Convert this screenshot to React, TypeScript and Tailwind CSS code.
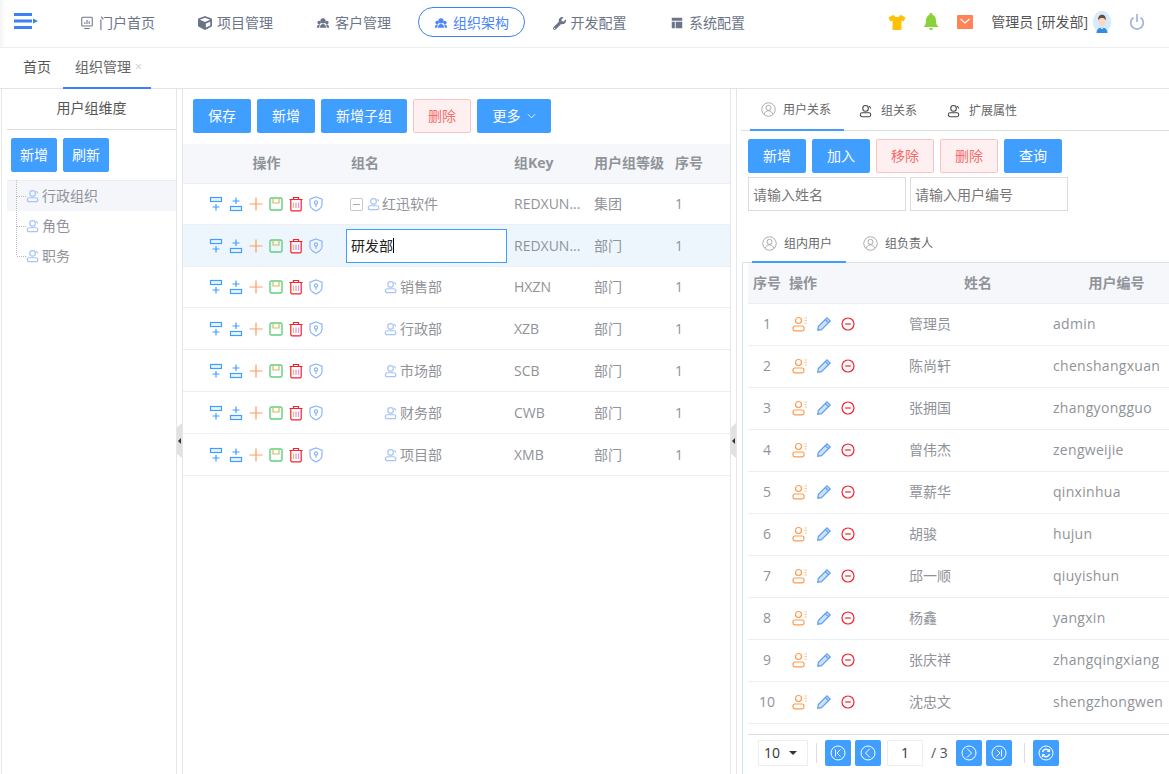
import type { ReactNode } from "react";
import clsx from "clsx";
import { FaCube, FaWrench } from "react-icons/fa";

const Svg = ({ children, className }: { children: ReactNode; className?: string }) => (
  <svg viewBox="0 0 16 16" fill="none" stroke="currentColor" strokeWidth="1.2" className={clsx("block w-4 h-4 shrink-0", className)}>
    {children}
  </svg>
);

const BoardIcon = ({ className }: { className?: string }) => (
  <Svg className={className}>
    <rect x="2" y="1.5" width="12" height="10" rx="1" />
    <path d="M5.5 9V7M8 9V4.5M10.5 9V6M5 14.3h6" />
  </Svg>
);

const GroupIcon = ({ className }: { className?: string }) => (
  <svg viewBox="0 0 16 16" fill="currentColor" className={clsx("block w-4 h-4 shrink-0", className)}>
    <circle cx="8" cy="5.5" r="3" />
    <circle cx="3.6" cy="7.5" r="2" />
    <circle cx="12.4" cy="7.5" r="2" />
    <path d="M4.5 13.5c0-3 1.5-4.5 3.5-4.5s3.5 1.5 3.5 4.5zM1 13.5c0-2.3.9-3.8 2.6-3.8.5 0 .8.1 1 .3-.7 1-1 2.2-1 3.5zM15 13.5c0-2.3-.9-3.8-2.6-3.8-.5 0-.8.1-1 .3.7 1 1 2.2 1 3.5z" />
  </svg>
);

const TableIcon = ({ className }: { className?: string }) => (
  <svg viewBox="0 0 16 16" fill="currentColor" className={clsx("block w-4 h-4 shrink-0", className)}>
    <path d="M2 2h12v3.5H2zM2 6.5h3.5V14H2zM6.5 6.5H14V14H6.5z" />
  </svg>
);

// head plus wide shoulders, used in the trees and the tab bars
const PersonPaths = () => (
  <>
    <circle cx="7.5" cy="5" r="3.2" />
    <rect x="1.5" y="10" width="12" height="4.5" rx="2.2" />
    <path d="M11.5 2.5c1 .5 1.8 1.5 1.8 2.7" />
  </>
);

const UserIcon = ({ className }: { className?: string }) => (
  <svg viewBox="0 0 16 16" fill="none" stroke="currentColor" strokeWidth="1.4" className={clsx("block w-[14px] h-[14px] shrink-0 text-[#a9c4f5]", className)}>
    <PersonPaths />
  </svg>
);

const TabUser = () => (
  <svg viewBox="0 0 16 16" fill="none" stroke="currentColor" strokeWidth="1.2" className="block w-[14px] h-[14px] shrink-0 text-[#444]">
    <PersonPaths />
  </svg>
);

const CircleUser = ({ className }: { className?: string }) => (
  <Svg className={clsx("text-[#909399]", className)}>
    <circle cx="8" cy="8" r="7.2" strokeWidth="0.8" />
    <circle cx="8" cy="6.2" r="2.7" strokeWidth="0.8" />
    <path d="M3.5 13c.5-2.2 2.3-3.6 4.5-3.600s4 1.400 4.500 3.600" strokeWidth="0.8" />
  </Svg>
);

const groupOps = [
  <Svg key="above" className="text-[#409eff]">
    <rect x="2.5" y="1.5" width="11" height="4" fill="#eaf4ff" />
    <path d="M8 8v6.5M4.5 11h7" />
  </Svg>,
  <Svg key="below" className="text-[#409eff]">
    <rect x="2.5" y="10.5" width="11" height="4" fill="#eaf4ff" />
    <path d="M8 1.500V8M4.500 5h7" />
  </Svg>,
  <Svg key="plus" className="text-[#ff9a5c]">
    <path d="M8 1.500v13M1.500 8h13" />
  </Svg>,
  <Svg key="save" className="text-[#5fcf80]">
    <rect x="2" y="2" width="12" height="12" rx="1.500" strokeWidth="1.400" />
    <path d="M5 2v5h6V2" stroke="#c9c05f" />
  </Svg>,
  <Svg key="trash" className="text-[#f5222d]">
    <path d="M1.500 3.500h13M5.500 3.500V1.500h5v2M2.800 3.500v10a1.300 1.300 0 0 0 1.300 1.300h7.800a1.300 1.300 0 0 0 1.300-1.300v-10" strokeWidth="1.200" />
    <path d="M5.500 6.500v5.500" stroke="#ffb27d" />
    <path d="M8 6.500v5.500" stroke="#f98ac0" />
    <path d="M10.500 6.500v5.500" stroke="#d6a0ff" />
  </Svg>,
  <Svg key="shield" className="text-[#8db4fb]">
    <path d="M8 1l6 2.200v5.300c0 3-2.700 5-6 6.500-3.300-1.500-6-3.500-6-6.500V3.200z" />
    <circle cx="8" cy="6.500" r="1.600" />
    <path d="M8 8.100v3" />
  </Svg>,
];

const userOps = [
  <Svg key="user" className="text-[#ff9a4d]">
    <circle cx="6.500" cy="4.500" r="3" />
    <rect x="1" y="10" width="11" height="4.800" rx="1.800" />
    <path d="M12.500 2h2.500M12.500 4.500h2.500M12.500 7h2.500" stroke="#f7c9a2" />
  </Svg>,
  <Svg key="pencil" className="text-[#5b9df5]">
    <path d="M11 1.800l3.200 3.200-8.700 8.700-3.700.5.500-3.700z" fill="#cfe2fb" />
    <path d="M9.300 3.500l3.200 3.200" />
  </Svg>,
  <Svg key="minus" className="text-[#f5222d]">
    <circle cx="8" cy="8" r="6" />
    <path d="M5.200 8h5.600" />
  </Svg>,
];

const navItems = [
  { icon: <BoardIcon className="w-[14px] h-[14px]" />, label: "门户首页" },
  { icon: <FaCube className="w-[14px] h-[14px]" />, label: "项目管理" },
  { icon: <GroupIcon className="w-[14px] h-[14px]" />, label: "客户管理" },
  { icon: <GroupIcon className="w-[14px] h-[14px]" />, label: "组织架构", active: true },
  { icon: <FaWrench className="w-[13px] h-[13px]" />, label: "开发配置" },
  { icon: <TableIcon className="w-[14px] h-[14px]" />, label: "系统配置" },
];

const Btn = ({ children, danger, className }: { children: ReactNode; danger?: boolean; className?: string }) => (
  <button
    type="button"
    className={clsx(
      "h-[34px] rounded-[2px] border text-sm flex items-center justify-center",
      danger ? "bg-[#fef0f0] border-[#fbc4c4] text-[#f56c6c]" : "bg-[#409eff] border-[#409eff] text-white",
      className ?? "w-[58px]",
    )}
  >
    {children}
  </button>
);

const Header = () => (
  <header className="h-[48px] shrink-0 flex items-center pb-[3px] border-b border-[#eeeeee] bg-gradient-to-r from-[#f4f4f4] to-white to-[0.5%]">
    <div className="w-[64px] pl-[14px]">
      <svg viewBox="0 0 24 18" className="block w-[24px] h-[18px] text-[#3b82f6]" fill="currentColor">
        <path d="M0 0h18v3H0zM0 6.500h18v3H0zM0 13h18v3H0zM19 5.500l5 2.500-5 2.500z" />
      </svg>
    </div>
    <nav className="flex gap-[11px]">
      {navItems.map((item) => (
        <a
          key={item.label}
          className={clsx(
            "w-[107px] h-[30px] pt-[2px] rounded-full flex items-center justify-center gap-[5px] text-sm border",
            item.active ? "border-[#3b82f6] text-[#4a86f7]" : "border-transparent text-[#6b7488]",
          )}
        >
          {item.icon}
          {item.label}
        </a>
      ))}
    </nav>
    <div className="ml-auto flex items-center pr-[24px]">
      <svg viewBox="0 0 16 16" className="block w-[18px] h-[18px] text-[#ffc107]" fill="currentColor">
        <path d="M5 1.500 0.500 4l1.500 3.500 2-.8V15h8V6.700l2 .8L15.500 4 11 1.500c-.5 1.500-1.500 2-3 2s-2.500-.5-3-2z" />
      </svg>
      <svg viewBox="0 0 16 18" className="block w-[16px] h-[18px] ml-[17px] text-[#8bd13b]" fill="currentColor">
        <path d="M8 0a1.500 1.500 0 0 1 1.500 1.700C12 2.500 13 5 13 8c0 3 1 4.500 2.500 6h-15C2 12.500 3 11 3 8c0-3 1-5.500 3.500-6.300A1.500 1.500 0 0 1 8 0zM6 15h4a2 2 0 0 1-4 0z" />
      </svg>
      <svg viewBox="0 0 16 16" className="block w-[16px] h-[16px] ml-[18px]">
        <rect y="1" width="16" height="14" rx="1" fill="#ff8357" />
        <path d="M3.500 5 8 9l4.500-4" fill="none" stroke="#fff" strokeWidth="1.300" />
      </svg>
      <span className="ml-[18px] text-sm text-[#555]">管理员 [研发部]</span>
      <svg viewBox="0 0 20 24" className="block w-[20px] h-[22px] ml-[4px]">
        <ellipse cx="10" cy="12" rx="10" ry="12" fill="#d6ebfb" />
        <path d="M4 24c0-4 3-6 6-6s6 2 6 6z" fill="#2f8ce0" />
        <ellipse cx="10" cy="11" rx="4" ry="5.500" fill="#f6d8c4" />
        <path d="M5.800 10c-.4-4 1.700-6 4.200-6s4.600 2 4.200 6c-1-2-2.500-2.500-4.200-2.500S6.800 8 5.800 10z" fill="#6b4a3a" />
        <path d="M8 18l2 2 2-2z" fill="#fff" />
      </svg>
      <svg viewBox="0 0 16 18" fill="none" stroke="#a3b5de" strokeWidth="1.700" className="block w-[16px] h-[18px] ml-[17px]">
        <path d="M8 1v8M4.500 4.500a6.300 6.300 0 1 0 7 0" />
      </svg>
    </div>
  </header>
);

const PageTabs = () => (
  <div className="h-[41px] shrink-0 flex border-b border-[#e4e4e4] text-sm">
    <div className="w-[63px] pl-[23px] pb-[2px] flex items-center text-[#555]">首页</div>
    <div className="w-[88px] pl-[12px] pb-[2px] flex items-center gap-[4px] border-b-2 border-[#3b82f6] h-[41px] text-[#666]">
      组织管理
      <span className="text-[12px] text-[#ccc] leading-none">×</span>
    </div>
  </div>
);

const LeftPanel = () => (
  <aside className="w-[176px] shrink-0 ml-[1px] border-x border-[#e6e6e6] flex flex-col">
    <div className="h-[41px] shrink-0 flex items-center justify-center pb-[2px] border-b border-[#dddddd] ml-[5px] text-sm text-[#555]">
      用户组维度
    </div>
    <div className="flex gap-[6px] pl-[9px] pt-[8px] pb-[8px]">
      <Btn className="w-[46px]">新增</Btn>
      <Btn className="w-[46px]">刷新</Btn>
    </div>
    <ul className="relative ml-[5px] text-sm text-[#909399]">
      <span className="absolute left-[9px] top-0 h-[75px] border-l border-dotted border-[#bbb]" />
      {["行政组织", "角色", "职务"].map((t, i) => (
        <li
          key={t}
          className={clsx(
            "h-[30px] flex items-center pl-[19px] gap-[2px]",
            i === 0 && "bg-[#f5f6fa] border-t border-[#eceef2] h-[31px]",
          )}
        >
          <span className="absolute left-[10px] w-[9px] border-t border-dotted border-[#bbb]" />
          <UserIcon />
          {t}
        </li>
      ))}
    </ul>
  </aside>
);

const Handle = () => (
  <div className="w-[6px] shrink-0 relative border-r border-[#e6e6e6]">
    <div className="absolute left-0 top-[334px] w-[5px] h-[35px] bg-[#e2e2e2] [clip-path:polygon(0_12%,100%_0,100%_100%,0_88%)] flex items-center justify-center">
      <span className="w-0 h-0 border-y-[3px] border-y-transparent border-r-[3px] border-r-[#333]" />
    </div>
  </div>
);

const groupRows = [
  { name: "红迅软件", key: "REDXUN...", level: "集团", root: true, height: "h-[41px]" },
  { name: "研发部", key: "REDXUN...", level: "部门", editing: true, height: "h-[42px] bg-[#eef6fd]" },
  { name: "销售部", key: "HXZN", level: "部门", height: "h-[41px]" },
  { name: "行政部", key: "XZB", level: "部门", height: "h-[42px]" },
  { name: "市场部", key: "SCB", level: "部门", height: "h-[42px]" },
  { name: "财务部", key: "CWB", level: "部门", height: "h-[42px]" },
  { name: "项目部", key: "XMB", level: "部门", height: "h-[42px]" },
];

const groupCols = "grid grid-cols-[163px_163px_80px_81px_1fr]";

const MiddlePanel = () => (
  <section className="w-[548px] shrink-0 border-r border-[#e6e6e6] flex flex-col">
    <div className="flex gap-[6px] pl-[10px] pt-[10px] pb-[11px]">
      <Btn>保存</Btn>
      <Btn>新增</Btn>
      <Btn className="w-[86px]">新增子组</Btn>
      <Btn danger>删除</Btn>
      <Btn className="w-[74px] gap-[6px]">
        更多
        <svg viewBox="0 0 10 6" fill="none" stroke="currentColor" className="block w-[9px] h-[6px]">
          <path d="M1 1l4 4 4-4" />
        </svg>
      </Btn>
    </div>
    <div className={clsx(groupCols, "h-[40px] pb-[2px] items-center bg-[#f5f7fa] border-b border-[#ebeef5] text-sm font-bold text-[#909399]")}>
      <div className="text-center pl-[4px]">操作</div>
      <div className="pl-[5px]">组名</div>
      <div className="pl-[5px]">组Key</div>
      <div className="pl-[5px] whitespace-nowrap">用户组等级</div>
      <div className="pl-[5px]">序号</div>
    </div>
    {groupRows.map((r) => (
      <div
        key={r.name}
        className={clsx(groupCols, "items-center border-b border-[#ebeef5] text-sm text-[#909399]", r.height)}
      >
        <div className="flex justify-center gap-[4px] pl-[2px]">{groupOps}</div>
        {r.editing ? (
          <div className="h-[34px] w-[161px] border border-[#409eff] bg-white flex items-center pl-[4px] text-[#222]">
            研发部
            <span className="w-px h-[15px] bg-black" />
          </div>
        ) : r.root ? (
          <div className="flex items-center pl-[4px]">
            <span className="w-[13px] h-[13px] border border-[#c8c8c8] rounded-[2px] flex items-center justify-center">
              <span className="w-[7px] h-px bg-[#aaa]" />
            </span>
            <UserIcon className="ml-[4px] mr-[1px]" />
            {r.name}
          </div>
        ) : (
          <div className="flex items-center pl-[38px] gap-[2px]">
            <UserIcon />
            {r.name}
          </div>
        )}
        <div className="pl-[5px]">{r.key}</div>
        <div className="pl-[5px]">{r.level}</div>
        <div className="pl-[5px]">1</div>
      </div>
    ))}
  </section>
);

const users = [
  ["管理员", "admin"],
  ["陈尚轩", "chenshangxuan"],
  ["张拥国", "zhangyongguo"],
  ["曾伟杰", "zengweijie"],
  ["覃薪华", "qinxinhua"],
  ["胡骏", "hujun"],
  ["邱一顺", "qiuyishun"],
  ["杨鑫", "yangxin"],
  ["张庆祥", "zhangqingxiang"],
  ["沈忠文", "shengzhongwen"],
];

const userCols = "grid grid-cols-[38px_118px_144px_137px]";

const PageBtn = ({ children }: { children: ReactNode }) => (
  <button type="button" className="w-[26px] h-[26px] rounded-[2px] bg-[#409eff] flex items-center justify-center text-white">
    <svg viewBox="0 0 16 16" fill="none" stroke="currentColor" strokeWidth="1" className="block w-[16px] h-[16px]">
      <circle cx="8" cy="8" r="7" />
      {children}
    </svg>
  </button>
);

const Pagination = () => (
  <div className="h-[40px] shrink-0 border-t border-[#dddddd] flex items-center pl-[10px] pb-[3px] text-sm text-[#555]">
    <div className="w-[50px] h-[26px] border border-[#eeeeee] flex items-center pl-[5px] gap-[9px] text-[#333]">
      10
      <span className="w-0 h-0 border-x-[4px] border-x-transparent border-t-[4px] border-t-[#333]" />
    </div>
    <span className="w-px h-[20px] bg-[#ddd] ml-[8px] mr-[8px]" />
    <div className="flex gap-[4px]">
      <PageBtn>
        <path d="M5.500 4.500v7M10.500 4.500 7 8l3.500 3.500" />
      </PageBtn>
      <PageBtn>
        <path d="M10 3.500 5.500 8l4.500 4.500" />
      </PageBtn>
    </div>
    <div className="w-[36px] h-[26px] ml-[6px] border border-[#eeeeee] flex items-center justify-center text-[#333]">1</div>
    <span className="ml-[8px] w-[25px]">/ 3</span>
    <div className="flex gap-[4px]">
      <PageBtn>
        <path d="M6 3.500 10.500 8 6 12.500" />
      </PageBtn>
      <PageBtn>
        <path d="M10.500 4.500v7M5.500 4.500 9 8l-3.500 3.500" />
      </PageBtn>
    </div>
    <span className="w-px h-[20px] bg-[#ddd] ml-[12px] mr-[8px]" />
    <PageBtn>
      <path d="M4.500 7a3.600 3.600 0 0 1 6.500-1.200M11.500 9a3.600 3.600 0 0 1-6.500 1.200" strokeWidth="1.400" />
      <path d="M11.500 4v2.300H9.200M4.500 12V9.700h2.300" strokeWidth="1.200" />
    </PageBtn>
  </div>
);

const RightPanel = () => (
  <section className="flex-1 min-w-0 ml-[4px] flex flex-col overflow-hidden">
    <div className="h-[42px] shrink-0 flex border-b border-[#dddddd] text-[12px] text-[#666] pt-[1px] ml-[-1px]">
      <div className="w-[94px] ml-[10px] pl-[11px] flex items-center gap-[7px] border-b-2 border-[#409eff] h-[41px]">
        <CircleUser className="w-[15px] h-[15px]" />
        用户关系
      </div>
      <div className="flex items-center gap-[8px] ml-[15px] h-[41px]">
        <TabUser />
        组关系
      </div>
      <div className="flex items-center gap-[8px] ml-[30px] h-[41px]">
        <TabUser />
        扩展属性
      </div>
    </div>
    <div className="flex gap-[6px] pl-[7px] pt-[8px]">
      <Btn>新增</Btn>
      <Btn>加入</Btn>
      <Btn danger>移除</Btn>
      <Btn danger>删除</Btn>
      <Btn>查询</Btn>
    </div>
    <div className="flex gap-[4px] pl-[7px] pt-[4px]">
      <input placeholder="请输入姓名" className="w-[158px] h-[34px] border border-[#dddddd] pl-[4px] text-sm placeholder:text-[#777]" />
      <input placeholder="请输入用户编号" className="w-[158px] h-[34px] border border-[#dddddd] pl-[4px] text-sm placeholder:text-[#777]" />
    </div>
    <div className="h-[52px] shrink-0 ml-[1px] flex items-end border-b border-[#dde1e8] text-[12px] text-[#666]">
      <div className="ml-[10px] w-[94px] h-[37px] pl-[10px] flex items-center gap-[7px] border-b-2 border-[#409eff] -mb-px">
        <CircleUser className="w-[15px] h-[15px]" />
        组内用户
      </div>
      <div className="ml-[17px] h-[37px] flex items-center gap-[7px]">
        <CircleUser className="w-[15px] h-[15px]" />
        组负责人
      </div>
    </div>
    <div className="flex-1 min-h-0 ml-[1px] border-l border-[#cfe3f3] pl-[5px] flex flex-col">
      <div className="flex-1 min-h-0 overflow-hidden">
        <div className={clsx(userCols, "h-[41px] items-center bg-[#f5f7fa] border-b border-[#ebeef5] text-sm font-bold text-[#909399] w-[437px]")}>
          <div className="pl-[5px] whitespace-nowrap">序号</div>
          <div className="pl-[3px]">操作</div>
          <div className="text-center pl-[4px]">姓名</div>
          <div className="text-center">用户编号</div>
        </div>
        {users.map(([name, code], i) => (
          <div key={code} className={clsx(userCols, "h-[42px] pb-[2px] items-center border-b border-[#ebeef5] text-sm text-[#909399] w-[437px]")}>
            <div className="text-center">{i + 1}</div>
            <div className="flex gap-[8px] pl-[6px]">{userOps}</div>
            <div className="pl-[5px]">{name}</div>
            <div className="pl-[5px] tracking-[0.3px]">{code}</div>
          </div>
        ))}
      </div>
      <Pagination />
    </div>
  </section>
);

export default function App() {
  return (
    <div className="w-screen h-screen overflow-hidden bg-white flex flex-col [font-family:'Open_Sans','Noto_Sans_CJK_SC',sans-serif]">
      <Header />
      <PageTabs />
      <main className="flex-1 min-h-0 flex">
        <LeftPanel />
        <Handle />
        <MiddlePanel />
        <Handle />
        <RightPanel />
      </main>
    </div>
  );
}
